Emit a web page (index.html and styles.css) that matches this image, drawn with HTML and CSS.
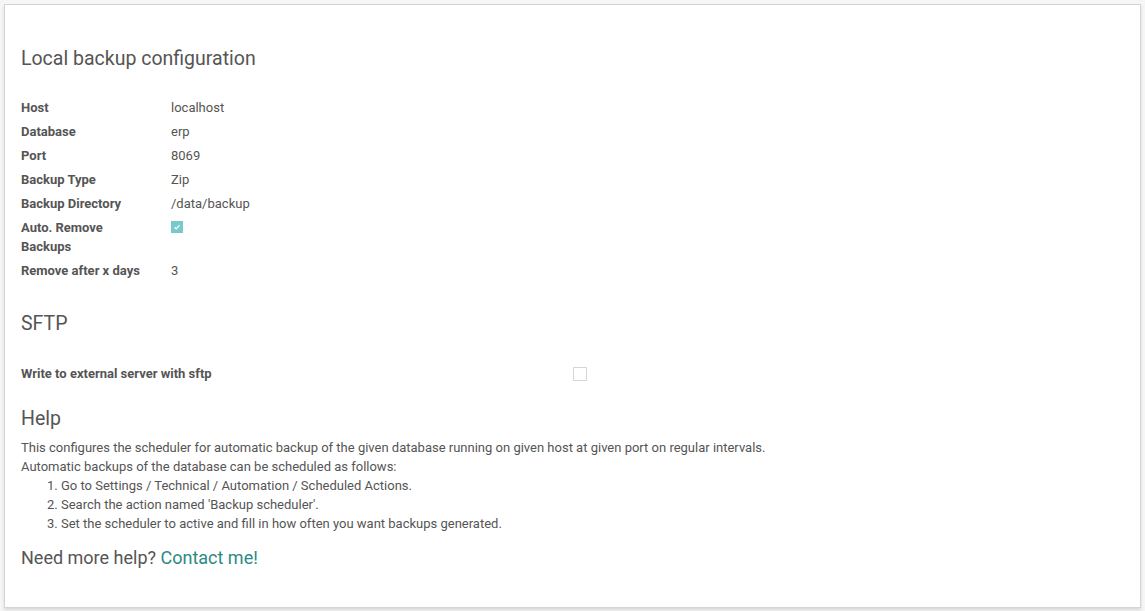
FILE: index.html
```html
<!DOCTYPE html>
<html lang="en">
<head>
	<meta charset="utf-8">
	<title>Local backup configuration</title>
	<link rel="stylesheet" href="styles.css">
</head>
<body>
	<div class="sheet">
		<h1 class="title">Local backup configuration</h1>

		<table class="fields">
			<tr><td class="label">Host</td><td class="value">localhost</td></tr>
			<tr><td class="label">Database</td><td class="value">erp</td></tr>
			<tr><td class="label">Port</td><td class="value">8069</td></tr>
			<tr><td class="label">Backup Type</td><td class="value">Zip</td></tr>
			<tr><td class="label">Backup Directory</td><td class="value">/data/backup</td></tr>
			<tr>
				<td class="label">Auto. Remove Backups</td>
				<td class="value"><span class="check checked">
					<svg width="8" height="8" viewBox="0 0 8 8"><path d="M1.5 4.2 L3.2 5.8 L6.5 2.2" fill="none" stroke="#fff" stroke-width="1.2"/></svg>
				</span></td>
			</tr>
			<tr><td class="label">Remove after x days</td><td class="value">3</td></tr>
		</table>

		<h2 class="heading">SFTP</h2>

		<div class="sftp">
			<div class="sftp-label">Write to external server with sftp</div>
			<div><span class="check"></span></div>
		</div>

		<h2 class="heading help-heading">Help</h2>
		<div class="help">
			<p>This configures the scheduler for automatic backup of the given database running on given host at given port on regular intervals.</p>
			<p>Automatic backups of the database can be scheduled as follows:</p>
			<ol>
				<li>Go to Settings / Technical / Automation / Scheduled Actions.</li>
				<li>Search the action named 'Backup scheduler'.</li>
				<li>Set the scheduler to active and fill in how often you want backups generated.</li>
			</ol>
		</div>

		<h3 class="more">Need more help? <a href="#">Contact me!</a></h3>
	</div>
</body>
</html>
```

FILE: styles.css
```css
body {
	font-family: Roboto, "Noto Sans", sans-serif;
	font-size: 13px;
	line-height: 19px;
	color: #555;
	background-color: #f6f6f6;
	margin: 0;
	padding: 4px;
}

.sheet {
	box-sizing: border-box;
	width: 1137px;
	height: 604px;
	padding: 42px 16px 0 16px;
	background-color: #fff;
	border: 1px solid #d4d4d4;
	box-shadow: 0 2px 3px rgba(0, 0, 0, 0.12);
}

.title {
	font-size: 19.5px;
	font-weight: 400;
	line-height: 24px;
	margin: 0 0 27px 0;
}

.fields {
	border-collapse: collapse;
}

.fields td {
	padding: 0 0 5px 0;
	vertical-align: top;
}

.label {
	width: 130px;
	padding-right: 20px !important;
	font-weight: 700;
}

.check {
	display: inline-block;
	box-sizing: border-box;
	width: 12px;
	height: 12px;
	border: 1px solid #d6d6d6;
	vertical-align: -1px;
	position: relative;
}

.check.checked {
	background-color: #78c8cc;
	border-color: #78c8cc;
}

.check svg {
	position: absolute;
	left: 1px;
	top: 1px;
}

.heading {
	font-size: 19.5px;
	font-weight: 400;
	line-height: 24px;
	margin: 27px 0 0 0;
}

.sftp {
	display: grid;
	grid-template-columns: 552px 1fr;
	margin-top: 28px;
}

.sftp-label {
	font-weight: 700;
}

.sftp .check {
	width: 14px;
	height: 14px;
	vertical-align: -3px;
}

.help-heading {
	margin-top: 24px;
}

.help {
	margin-top: 7px;
}

.help p {
	margin: 0;
}

.help ol {
	margin: 0;
	padding-left: 40px;
}

.more {
	font-size: 18px;
	font-weight: 400;
	line-height: 22px;
	margin: 14px 0 0 0;
}

.more a {
	color: #2b8a84;
	text-decoration: none;
}
```
